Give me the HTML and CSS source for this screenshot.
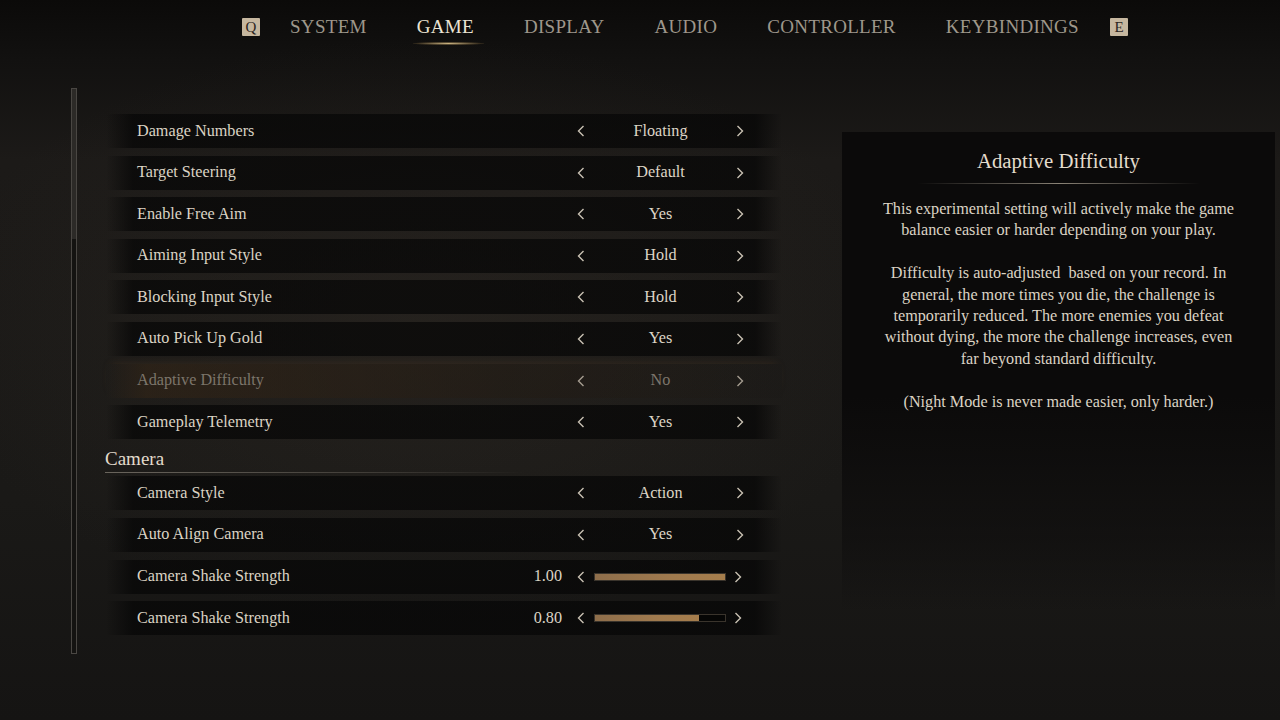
FILE: index.html
```html
<!DOCTYPE html>
<html lang="en">
<head>
<meta charset="utf-8">
<title>Settings - Game</title>
<link rel="stylesheet" href="styles.css">
</head>
<body>
<div class="screen">
  <nav class="nav">
    <span class="key key-q">Q</span>
    <span class="tab">SYSTEM</span>
    <span class="tab active">GAME</span>
    <span class="tab">DISPLAY</span>
    <span class="tab">AUDIO</span>
    <span class="tab">CONTROLLER</span>
    <span class="tab">KEYBINDINGS</span>
    <span class="key key-e">E</span>
  </nav>

  <main class="main">
    <div class="scrollbar"><div class="thumb"></div></div>

    <section class="list">
      <div class="row">
        <span class="label">Damage Numbers</span>
        <div class="picker">
          <svg class="arrow" viewBox="0 0 8 12"><path d="M6.5 1 L1.5 6 L6.5 11"/></svg>
          <span class="value">Floating</span>
          <svg class="arrow" viewBox="0 0 8 12"><path d="M1.5 1 L6.5 6 L1.5 11"/></svg>
        </div>
      </div>
      <div class="row">
        <span class="label">Target Steering</span>
        <div class="picker">
          <svg class="arrow" viewBox="0 0 8 12"><path d="M6.5 1 L1.5 6 L6.5 11"/></svg>
          <span class="value">Default</span>
          <svg class="arrow" viewBox="0 0 8 12"><path d="M1.5 1 L6.5 6 L1.5 11"/></svg>
        </div>
      </div>
      <div class="row">
        <span class="label">Enable Free Aim</span>
        <div class="picker">
          <svg class="arrow" viewBox="0 0 8 12"><path d="M6.5 1 L1.5 6 L6.5 11"/></svg>
          <span class="value">Yes</span>
          <svg class="arrow" viewBox="0 0 8 12"><path d="M1.5 1 L6.5 6 L1.5 11"/></svg>
        </div>
      </div>
      <div class="row">
        <span class="label">Aiming Input Style</span>
        <div class="picker">
          <svg class="arrow" viewBox="0 0 8 12"><path d="M6.5 1 L1.5 6 L6.5 11"/></svg>
          <span class="value">Hold</span>
          <svg class="arrow" viewBox="0 0 8 12"><path d="M1.5 1 L6.5 6 L1.5 11"/></svg>
        </div>
      </div>
      <div class="row">
        <span class="label">Blocking Input Style</span>
        <div class="picker">
          <svg class="arrow" viewBox="0 0 8 12"><path d="M6.5 1 L1.5 6 L6.5 11"/></svg>
          <span class="value">Hold</span>
          <svg class="arrow" viewBox="0 0 8 12"><path d="M1.5 1 L6.5 6 L1.5 11"/></svg>
        </div>
      </div>
      <div class="row">
        <span class="label">Auto Pick Up Gold</span>
        <div class="picker">
          <svg class="arrow" viewBox="0 0 8 12"><path d="M6.5 1 L1.5 6 L6.5 11"/></svg>
          <span class="value">Yes</span>
          <svg class="arrow" viewBox="0 0 8 12"><path d="M1.5 1 L6.5 6 L1.5 11"/></svg>
        </div>
      </div>
      <div class="row selected">
        <span class="label">Adaptive Difficulty</span>
        <div class="picker">
          <svg class="arrow" viewBox="0 0 8 12"><path d="M6.5 1 L1.5 6 L6.5 11"/></svg>
          <span class="value">No</span>
          <svg class="arrow" viewBox="0 0 8 12"><path d="M1.5 1 L6.5 6 L1.5 11"/></svg>
        </div>
      </div>
      <div class="row">
        <span class="label">Gameplay Telemetry</span>
        <div class="picker">
          <svg class="arrow" viewBox="0 0 8 12"><path d="M6.5 1 L1.5 6 L6.5 11"/></svg>
          <span class="value">Yes</span>
          <svg class="arrow" viewBox="0 0 8 12"><path d="M1.5 1 L6.5 6 L1.5 11"/></svg>
        </div>
      </div>

      <h2 class="section">Camera</h2>

      <div class="row">
        <span class="label">Camera Style</span>
        <div class="picker">
          <svg class="arrow" viewBox="0 0 8 12"><path d="M6.5 1 L1.5 6 L6.5 11"/></svg>
          <span class="value">Action</span>
          <svg class="arrow" viewBox="0 0 8 12"><path d="M1.5 1 L6.5 6 L1.5 11"/></svg>
        </div>
      </div>
      <div class="row">
        <span class="label">Auto Align Camera</span>
        <div class="picker">
          <svg class="arrow" viewBox="0 0 8 12"><path d="M6.5 1 L1.5 6 L6.5 11"/></svg>
          <span class="value">Yes</span>
          <svg class="arrow" viewBox="0 0 8 12"><path d="M1.5 1 L6.5 6 L1.5 11"/></svg>
        </div>
      </div>
      <div class="row">
        <span class="label">Camera Shake Strength</span>
        <span class="number">1.00</span>
        <div class="slider">
          <svg class="arrow" viewBox="0 0 8 12"><path d="M6.5 1 L1.5 6 L6.5 11"/></svg>
          <div class="bar"><div class="fill" style="width:100%"></div></div>
          <svg class="arrow" viewBox="0 0 8 12"><path d="M1.5 1 L6.5 6 L1.5 11"/></svg>
        </div>
      </div>
      <div class="row">
        <span class="label">Camera Shake Strength</span>
        <span class="number">0.80</span>
        <div class="slider">
          <svg class="arrow" viewBox="0 0 8 12"><path d="M6.5 1 L1.5 6 L6.5 11"/></svg>
          <div class="bar"><div class="fill" style="width:80%"></div></div>
          <svg class="arrow" viewBox="0 0 8 12"><path d="M1.5 1 L6.5 6 L1.5 11"/></svg>
        </div>
      </div>
    </section>

    <aside class="panel">
      <h1 class="panel-title">Adaptive Difficulty</h1>
      <div class="divider"></div>
      <p>This experimental setting will actively make the game balance easier or harder depending on your play.</p>
      <p>Difficulty is auto-adjusted&nbsp; based on your record. In general, the more times you die, the challenge is temporarily reduced. The more enemies you defeat without dying, the more the challenge increases, even far beyond standard difficulty.</p>
      <p>(Night Mode is never made easier, only harder.)</p>
    </aside>
  </main>
</div>
</body>
</html>
```

FILE: styles.css
```css
html, body {
  margin: 0;
  padding: 0;
}

body {
  width: 1280px;
  height: 720px;
  overflow: hidden;
  background: #141312;
  font-family: "Liberation Serif", "DejaVu Serif", serif;
  color: #d9d1c2;
}

.screen {
  width: 1280px;
  height: 720px;
  background:
    radial-gradient(ellipse 700px 420px at 420px 330px, rgba(60, 52, 44, 0.3), transparent 70%),
    linear-gradient(to bottom, #0b0a09 0px, #121110 60px, #1c1a18 160px, #1a1917 500px, #151413 720px);
}

/* ---------- top navigation ---------- */
.nav {
  height: 54px;
  display: flex;
  justify-content: center;
  align-items: center;
  gap: 50px;
  padding-left: 90px;
}

.tab {
  font-size: 19px;
  letter-spacing: 0.3px;
  color: #9e978b;
  line-height: 24px;
  position: relative;
}

.tab.active {
  color: #ece4d4;
}

.tab.active::after {
  content: "";
  position: absolute;
  left: -4px;
  right: -10px;
  bottom: -6px;
  height: 3px;
  border-radius: 2px;
  background: radial-gradient(ellipse at center, rgba(222, 196, 140, 0.9), rgba(150, 120, 70, 0.3) 60%, transparent 80%);
}

.key {
  width: 18px;
  height: 18px;
  background: #c6b79f;
  color: #2a241d;
  font-size: 15px;
  line-height: 18px;
  text-align: center;
  border-radius: 1px;
}

.key-q { margin-right: -20px; }
.key-e { margin-left: -19px; }

/* ---------- main ---------- */
.main {
  display: flex;
  align-items: flex-start;
  padding-left: 71px;
}

.scrollbar {
  margin-top: 34px;
  width: 4px;
  height: 564px;
  border: 1px solid #4a4743;
  background: #141311;
}

.thumb {
  height: 150px;
  background: #2c2a27;
}

.list {
  margin-left: 29px;
  margin-top: 60px;
  width: 676px;
  display: flex;
  flex-direction: column;
  gap: 7.6px;
}

.row {
  height: 34px;
  display: flex;
  align-items: center;
  padding: 0 31px;
  background: linear-gradient(to right, rgba(5, 5, 5, 0) 0%, rgba(6, 6, 6, 0.72) 4%, rgba(6, 6, 6, 0.72) 96%, rgba(5, 5, 5, 0) 100%);
  font-size: 16.2px;
}

.row.selected {
  background: linear-gradient(to right, rgba(40, 28, 16, 0) 0%, rgba(52, 37, 22, 0.55) 6%, rgba(34, 26, 18, 0.45) 60%, rgba(20, 18, 16, 0.1) 100%);
  box-shadow: 0 -4px 10px -6px rgba(120, 80, 40, 0.35);
}

.row.selected .label,
.row.selected .value {
  color: #7c756b;
}

.row.selected .arrow path {
  stroke: #a59d90;
}

.label {
  flex: 1;
  color: #dbd3c4;
}

.picker,
.slider {
  display: flex;
  align-items: center;
}

.picker {
  width: 181px;
}

.arrow {
  width: 8px;
  height: 12px;
  flex: none;
  margin: 0 7px;
}

.arrow path {
  fill: none;
  stroke: #c9c1b3;
  stroke-width: 1.4;
}

.value {
  flex: 1;
  text-align: center;
  color: #ddd5c6;
}

.number {
  margin-right: 8px;
  color: #dbd3c4;
}

.slider .arrow:first-child {
  margin: 0 9px 0 7px;
}

.slider .arrow:last-child {
  margin: 0 9px 0 8px;
}

.bar {
  width: 130px;
  height: 6px;
  border: 1px solid #3a342c;
  background: #060605;
}

.fill {
  height: 100%;
  background: linear-gradient(to right, #8e6e4b, #a07a4e 60%, #a57d4c);
}

.section {
  margin: -4px 0 -4px -1px;
  height: 25px;
  padding-top: 5px;
  font-weight: normal;
  font-size: 19px;
  line-height: 22px;
  color: #e2dacb;
  position: relative;
}

.section::after {
  content: "";
  position: absolute;
  left: 0;
  bottom: 0;
  width: 420px;
  height: 1px;
  background: linear-gradient(to right, #6a655d, rgba(90, 85, 78, 0.6) 60%, transparent);
}

/* ---------- description panel ---------- */
.panel {
  margin-left: 60px;
  margin-top: 78px;
  width: 433px;
  height: 480px;
  padding-top: 15px;
  box-sizing: border-box;
  background: linear-gradient(to bottom, #0b0a0a 0%, #0b0a0a 55%, rgba(14, 13, 13, 0.6) 85%, rgba(20, 19, 18, 0) 100%);
  text-align: center;
}

.panel-title {
  margin: 0;
  font-weight: normal;
  font-size: 20.8px;
  line-height: 28px;
  color: #e4dccd;
}

.divider {
  width: 282px;
  height: 1px;
  margin: 8px auto 15px 76px;
  background: linear-gradient(to right, transparent, #6c665d 40%, #8a8376 50%, #6c665d 60%, transparent);
}

.panel p {
  margin: 0 auto 21.4px;
  width: 362px;
  font-size: 16.2px;
  line-height: 21.4px;
  color: #dbd3c4;
}
```
